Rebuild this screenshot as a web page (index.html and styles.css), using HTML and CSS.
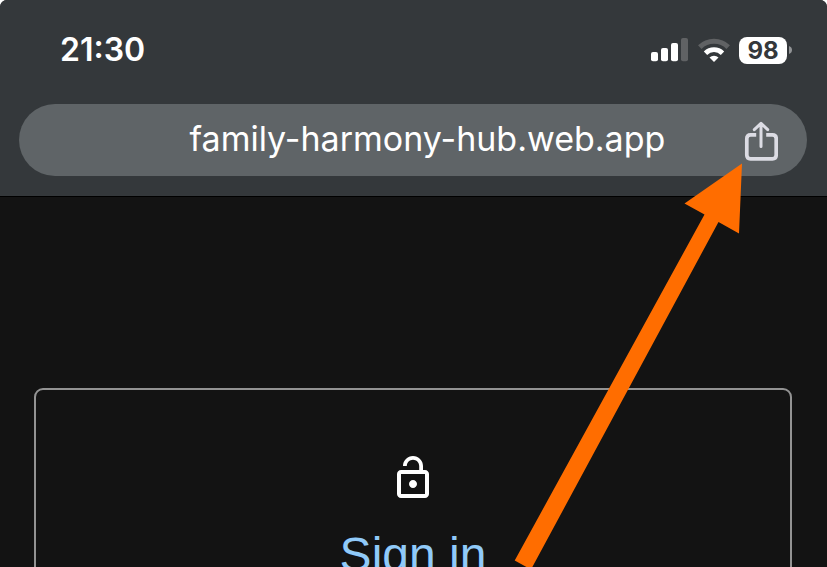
FILE: index.html
```
<!DOCTYPE html>
<html lang="en">
<head>
<meta charset="utf-8">
<title>Family Harmony Hub</title>
<link rel="stylesheet" href="styles.css">
</head>
<body>
<div class="screen">
  <header class="browser">
    <div class="status">
      <span class="time">21:30</span>
      <div class="indicators">
        <svg class="signal" width="37" height="24" viewBox="0 0 37 24" fill="#fff">
          <rect x="0" y="14" width="7" height="9.3" rx="2"/>
          <rect x="10" y="10" width="7" height="13.3" rx="2"/>
          <rect x="20" y="5" width="7" height="18.3" rx="2"/>
          <rect x="30" y="0" width="7" height="23.3" rx="2" fill="#606264"/>
        </svg>
        <svg class="wifi" width="32" height="25" viewBox="0 0 32 25">
          <path d="M1.8 9.1a20.3 20.3 0 0 1 28.4 0" fill="none" stroke="#606264" stroke-width="5"/>
          <path d="M7.5 15.2a12.1 12.1 0 0 1 17 0" fill="none" stroke="#fff" stroke-width="4.8"/>
          <path d="M16 24l-4.5-4.4a6.6 6.6 0 0 1 9 0z" fill="#fff"/>
        </svg>
        <span class="battery">98</span>
        <svg class="nub" width="4" height="10" viewBox="0 0 4 10"><path d="M0 1c4 1.3 4 6.7 0 8z" fill="#929496"/></svg>
      </div>
    </div>
    <div class="address">
      <span class="url">family-harmony-hub.web.app</span>
      <svg class="share" width="34" height="40" viewBox="0 0 34 40" fill="none" stroke="#dcdce4" stroke-width="3.7">
        <path d="M12.2 13.9H6.5Q2.8 13.9 2.8 17.6V34.1Q2.8 37.8 6.5 37.8H28.5Q32.2 37.8 32.2 34.1V17.6Q32.2 13.9 28.5 13.9H22.2"/>
        <path d="M17 25.4V3M10.3 8.6L17 2.3l6.7 6.3" stroke-width="3" stroke-linecap="round" stroke-linejoin="round"/>
      </svg>
    </div>
  </header>
  <main class="content">
    <section class="card">
      <svg width="48" height="48" viewBox="0 0 24 24" fill="#fff">
        <path fill-rule="evenodd" d="M12 17c1.1 0 2-.9 2-2s-.9-2-2-2-2 .9-2 2 .9 2 2 2zm6-9h-1V6c0-2.76-2.24-5-5-5S7 3.24 7 6h1.9c0-1.71 1.39-3.1 3.1-3.1 1.71 0 3.1 1.39 3.1 3.1v2H6c-1.1 0-2 .9-2 2v10c0 1.1.9 2 2 2h12c1.1 0 2-.9 2-2V10c0-1.1-.9-2-2-2zm0 12H6V10h12v10z"/>
      </svg>
      <h1 class="title">Sign in</h1>
    </section>
  </main>
  <svg class="arrow" width="827" height="567" viewBox="0 0 827 567">
    <path d="M742 163.5L684.5 203.5L704.5 214.5L514.7 560.5L531 569.5L718.5 222L739 233.5Z" fill="#ff6d00"/>
  </svg>
</div>
</body>
</html>
```
FILE: styles.css
```
* { box-sizing: border-box; }
body { margin: 0; background: #fff; font-family: Inter, sans-serif; }
.screen {
  position: relative;
  width: 827px;
  height: 567px;
  overflow: hidden;
  background: #131313;
  border-radius: 7px 7px 0 0;
}
.browser {
  height: 197px;
  padding: 0 20px 0 19px;
  background: #34383b;
  border-bottom: 1px solid #000;
}
.status {
  display: flex;
  align-items: center;
  justify-content: space-between;
  height: 104px;
  padding: 0 14px 4px 41px;
}
.time { color: #fff; font-size: 32px; font-weight: 600; line-height: 40px; }
.indicators { display: flex; align-items: center; }
.wifi { margin-left: 10px; }
.battery {
  width: 48px;
  height: 27px;
  margin: 0 2px 0 9px;
  border-radius: 8px;
  background: #fff;
  color: #34383b;
  font-size: 24px;
  font-weight: 700;
  line-height: 27px;
  text-align: center;
}
.address {
  display: grid;
  grid-template-columns: 1fr 447px 1fr;
  align-items: center;
  height: 72px;
  border-radius: 36px;
  background: #5f6467;
}
.url {
  grid-column: 2;
  padding-bottom: 3px;
  color: #fff;
  font-size: 34px;
  line-height: 40px;
  white-space: nowrap;
}
.share { justify-self: end; margin: 2px 29px 0 0; }
.content { padding: 191px 35px 0 34px; }
.card {
  display: flex;
  flex-direction: column;
  align-items: center;
  height: 240px;
  padding-top: 64px;
  border: 2px solid #939393;
  border-radius: 9px;
}
.title {
  margin: 25px 0 0;
  color: #90caf9;
  font: 400 48px/56px "Liberation Sans", Arial, sans-serif;
}
.arrow { position: absolute; top: 0; left: 0; }
```
